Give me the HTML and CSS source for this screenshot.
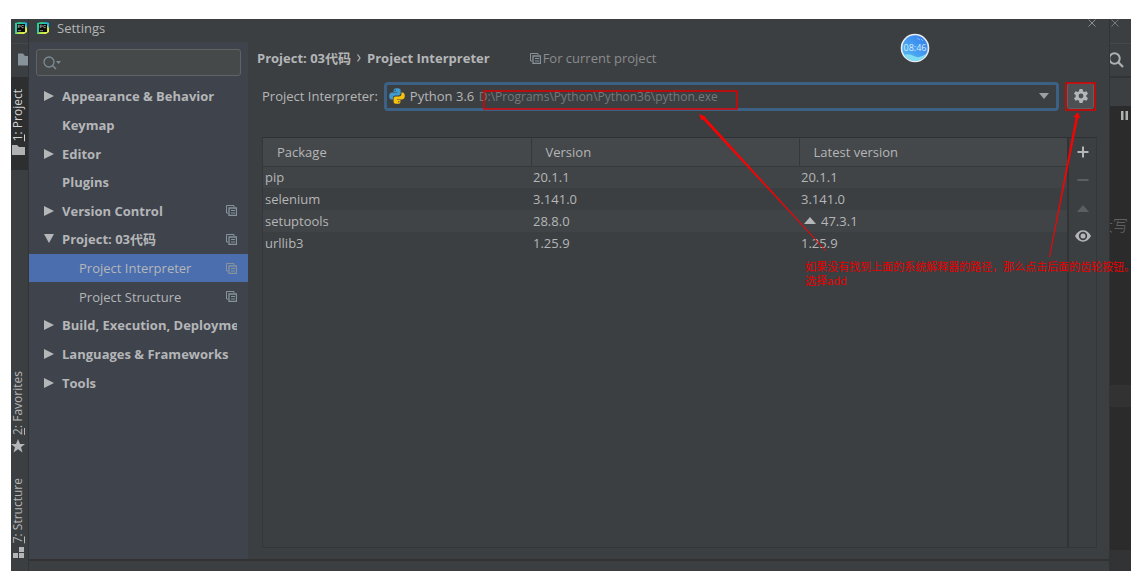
FILE: index.html
```html
<!DOCTYPE html>
<html lang="zh-CN">
<head>
<meta charset="utf-8">
<title>Settings</title>
<link rel="stylesheet" href="styles.css">
</head>
<body>
<svg class="defs" width="0" height="0" aria-hidden="true">
  <defs>
    <linearGradient id="pc-fill" x1="0" y1="0" x2="1" y2="1">
      <stop offset="0" stop-color="#21d789"/><stop offset=".45" stop-color="#2fc4a8"/><stop offset=".6" stop-color="#b6e04a"/><stop offset="1" stop-color="#fcf84a"/>
    </linearGradient>
    <linearGradient id="clock-fill" x1="0" y1="1" x2="1" y2="0">
      <stop offset="0" stop-color="#5cc0f2"/><stop offset="1" stop-color="#2f78ee"/>
    </linearGradient>
    <symbol id="pc" viewBox="0 0 12 12">
      <path d="M0 1 5 0 12 1V10L9 12H0Z" fill="url(#pc-fill)"/>
      <path d="M8 0 12 1V6Z" fill="#14b6e8"/>
      <path d="M2 2H10V10H2Z" fill="#0b0b0b"/>
      <path d="M3.2 6V3.2H4.6Q5.4 3.2 5.4 4T4.6 4.9H3.2M8.8 3.6Q6.4 2.6 6.4 4.5T8.8 5.6M3 8.7H6" fill="none" stroke="#ddd" stroke-width=".6"/>
    </symbol>
    <symbol id="folder" viewBox="0 0 13 12"><path d="M0 0H5L7 2.5H13V12H0Z" fill="currentColor"/></symbol>
    <symbol id="copy" viewBox="0 0 11 11">
      <path d="M2 8H.5V.5H8V2" fill="none" stroke="currentColor"/>
      <path d="M3 3H10.500V10.500H3Z" fill="none" stroke="currentColor" stroke-width="1.300"/><path d="M5 5.500H9M5 8H9" stroke="currentColor"/>
    </symbol>
    <symbol id="right" viewBox="0 0 10 10"><path d="M0 0 10 5 0 10Z" fill="currentColor"/></symbol>
    <symbol id="down" viewBox="0 0 10 10"><path d="M0 0H10L5 9Z" fill="currentColor"/></symbol>
    <symbol id="up" viewBox="0 0 12 7"><path d="M0 7 6 0 12 7Z" fill="currentColor"/></symbol>
    <symbol id="cross" viewBox="0 0 8 8"><path d="M.5.5 7.5 7.5M7.5.5.5 7.5" stroke="currentColor" stroke-width="1"/></symbol>
  </defs>
</svg>

<div class="frame">
  <nav class="rail" aria-label="Tool windows">
    <div class="rail-logo"><svg width="12" height="12"><use href="#pc"/></svg></div>
    <div class="rail-folder"><svg width="13" height="13"><use href="#folder"/></svg></div>
    <button class="rail-tab active"><svg width="13" height="10" viewBox="0 0 13 10"><path d="M0 0H5L7 2H13V10H0Z" fill="currentColor"/></svg><span><u>1</u>: Project</span></button>
    <div class="rail-gap"></div>
    <button class="rail-tab"><svg width="14" height="14" viewBox="0 0 14 14"><path d="M7 0 9 5H14L10 8.200 11.500 13.500 7 10.300 2.500 13.500 4 8.200 0 5H5Z" fill="currentColor"/></svg><span><u>2</u>: Favorites</span></button>
    <button class="rail-tab last"><svg width="11" height="11" viewBox="0 0 11 11"><path d="M6 0H11V5H6ZM0 6H5V11H0ZM6 6H11V11H6Z" fill="currentColor"/></svg><span><u>7</u>: Structure</span></button>
  </nav>

  <section class="dialog">
    <header class="titlebar">
      <svg width="12" height="12"><use href="#pc"/></svg>
      <h1>Settings</h1>
      <button class="close" aria-label="Close"><svg width="8" height="8"><use href="#cross"/></svg></button>
    </header>

    <div class="content">
      <aside class="sidebar">
        <div class="search">
          <svg width="18" height="14" viewBox="0 0 18 14"><circle cx="6" cy="6" r="5" fill="none" stroke="currentColor" stroke-width="1.300"/><path d="M9.500 9.500 13 13" stroke="currentColor" stroke-width="1.500"/><path d="M13 5H18L15.500 8Z" fill="currentColor"/></svg>
          <input type="text" aria-label="Search settings">
        </div>
        <ul class="tree">
          <li><svg class="arrow"><use href="#right"/></svg><span>Appearance &amp; Behavior</span></li>
          <li><i class="arrow"></i><span>Keymap</span></li>
          <li><svg class="arrow"><use href="#right"/></svg><span>Editor</span></li>
          <li><i class="arrow"></i><span>Plugins</span></li>
          <li><svg class="arrow"><use href="#right"/></svg><span>Version Control</span><svg class="copy"><use href="#copy"/></svg></li>
          <li><svg class="arrow"><use href="#down"/></svg><span>Project: 03代码</span><svg class="copy"><use href="#copy"/></svg></li>
          <li class="child selected"><span>Project Interpreter</span><svg class="copy"><use href="#copy"/></svg></li>
          <li class="child"><span>Project Structure</span><svg class="copy"><use href="#copy"/></svg></li>
          <li><svg class="arrow"><use href="#right"/></svg><span>Build, Execution, Deployment</span></li>
          <li><svg class="arrow"><use href="#right"/></svg><span>Languages &amp; Frameworks</span></li>
          <li><svg class="arrow"><use href="#right"/></svg><span>Tools</span></li>
        </ul>
      </aside>

      <main class="main">
        <div class="crumbs">
          <strong>Project: 03代码</strong>
          <svg width="4" height="8" viewBox="0 0 4 8"><path d="M.5.5 3 4 .5 7.500" fill="none" stroke="currentColor" stroke-width="1.200"/></svg>
          <strong>Project Interpreter</strong>
          <span class="scope"><svg class="copy"><use href="#copy"/></svg>For current project</span>
        </div>

        <div class="picker">
          <label for="interpreter">Project Interpreter:</label>
          <div class="combo">
            <select id="interpreter"><option>Python 3.6</option></select>
            <svg class="python" width="16" height="16" viewBox="0 0 16 16"><path d="M7.900.2C4.800.2 4.600 1.400 4.600 2.300V4H8.200V4.600H3C1.200 4.600.2 6 .2 8.200S1.300 11.600 2.700 11.600H4V9.700C4 8.300 5 7.500 6.300 7.500H9.700C10.900 7.500 11.600 6.600 11.600 5.600V2.300C11.600.7 9.900.2 7.900.2Z" fill="#3f9bcf"/><path d="M8.100 15.800C11.200 15.800 11.400 14.600 11.400 13.700V12H7.800V11.400H13C14.800 11.400 15.800 10 15.800 7.800S14.700 4.400 13.300 4.400H12.400V6.300C12.400 7.700 11.200 8.500 9.900 8.500H6.500C5.300 8.500 4.600 9.400 4.600 10.400V13.700C4.600 15.300 6.100 15.800 8.100 15.800Z" fill="#f4c20d"/><circle cx="6.200" cy="2.200" r=".7" fill="#3c3f41"/><circle cx="9.800" cy="13.800" r=".7" fill="#3c3f41"/></svg>
            <span class="path">D:\Programs\Python\Python36\python.exe</span>
            <svg class="caret" width="10" height="6" viewBox="0 0 10 6"><path d="M0 0H10L5 6Z" fill="currentColor"/></svg>
          </div>
          <button class="gear" aria-label="Interpreter options"><svg width="14" height="14" viewBox="0 0 14 14"><path fill="currentColor" fill-rule="evenodd" d="M5.500 0H8.500L9 2.300 10.200 3 12.500 2.300 14 4.800 12.300 6.300V7.700L14 9.200 12.500 11.700 10.200 11 9 11.700 8.500 14H5.500L5 11.700 3.800 11 1.500 11.700 0 9.200 1.700 7.700V6.300L0 4.800 1.500 2.300 3.800 3 5 2.300ZM7 4.600A2.400 2.400 0 1 0 7 9.400 2.400 2.400 0 1 0 7 4.600Z"/></svg></button>
        </div>

        <div class="packages">
          <div class="table-area">
            <table>
              <thead><tr><th>Package</th><th>Version</th><th>Latest version</th></tr></thead>
              <tbody>
                <tr><td>pip</td><td>20.1.1</td><td>20.1.1</td></tr>
                <tr><td>selenium</td><td>3.141.0</td><td>3.141.0</td></tr>
                <tr><td>setuptools</td><td>28.8.0</td><td><svg class="upgrade" width="12" height="7"><use href="#up"/></svg>47.3.1</td></tr>
                <tr><td>urllib3</td><td>1.25.9</td><td>1.25.9</td></tr>
              </tbody>
            </table>
          </div>
          <div class="tools">
            <button aria-label="Install"><svg width="12" height="12" viewBox="0 0 12 12"><path d="M6 .5V11.500M.5 6H11.500" stroke="currentColor" stroke-width="2"/></svg></button>
            <button class="off" aria-label="Uninstall"><svg width="12" height="2" viewBox="0 0 12 2"><path d="M.5 0H11.500V2H.5Z" fill="currentColor"/></svg></button>
            <button class="off" aria-label="Upgrade"><svg width="12" height="7"><use href="#up"/></svg></button>
            <button aria-label="Show early releases"><svg width="16" height="12" viewBox="0 0 16 12"><path fill="currentColor" fill-rule="evenodd" d="M0 6Q3 .3 8 .3T16 6Q13 11.700 8 11.700T0 6ZM8 1.800A4.200 4.200 0 1 0 8 10.200 4.200 4.200 0 1 0 8 1.800Z"/><circle cx="8" cy="6" r="2.500" fill="currentColor"/></svg></button>
          </div>
        </div>
      </main>
    </div>
    <footer class="dialog-foot"></footer>
  </section>

  <div class="editor">
    <div class="ed-title"><svg width="8" height="8"><use href="#cross"/></svg></div>
    <div class="ed-search"><svg width="16" height="16" viewBox="0 0 16 16"><circle cx="6.500" cy="6.500" r="5.200" fill="none" stroke="currentColor" stroke-width="2"/><path d="M10.300 10.300 15 15" stroke="currentColor" stroke-width="2.200"/></svg></div>
    <div class="ed-tabs"></div>
    <div class="ed-code"><svg width="7" height="9" viewBox="0 0 7 9"><path d="M0 0H2.500V9H0ZM4.500 0H7V9H4.500Z" fill="currentColor"/></svg><p>大写</p></div>
    <div class="ed-line"></div>
    <div class="ed-rest"></div>
    <div class="ed-foot"></div>
  </div>

  <svg class="marks" width="1120" height="552" viewBox="11 19 1120 552" aria-hidden="true">
    <g fill="none" stroke="#e00000" stroke-width="1.500">
      <rect x="484" y="91" width="253" height="18"/>
      <rect x="1066" y="83" width="29" height="27"/>
    </g>
    <g stroke="#f00" fill="#f00">
      <path d="M826 251 701.500 117.500 703.500 116Z" stroke-width=".6"/>
      <path d="M699 114 706 117 701.500 120.500Z" stroke="none"/>
      <path d="M1049.500 257 1076 117 1078 117Z" stroke-width=".6"/>
      <path d="M1078 112 1080 118 1073.500 117Z" stroke="none"/>
    </g>
  </svg>
  <p class="note">如果没有找到上面的系统解释器的路径，那么点击后面的齿轮按钮。<br>选择add</p>
  <div class="clock"><svg width="30" height="30" viewBox="0 0 30 30"><circle cx="15" cy="15" r="13.500" fill="url(#clock-fill)" stroke="#e9edf1" stroke-width="1.600"/><path d="M4 22Q9 20 14 23T26 21Q23 28 15 28 8 28 4 22Z" fill="#7fdcf2"/><path d="M17 5 20 7M21 6 23 8" stroke="#7db8ff"/></svg><time>08:46</time></div>
</div>
</body>
</html>
```

FILE: styles.css
```css
* { box-sizing: border-box; }

body {
  margin: 0;
  padding: 19px 0 13px 11px;
  min-height: 100vh;
  display: flex;
  background: #fff;
  color: #b4b6b8;
  font: 13px/18px "Open Sans", "Noto Sans CJK SC", sans-serif;
  overflow: hidden;
}
svg { display: block; flex: none; }
.defs { position: absolute; }
h1, p, ul { margin: 0; padding: 0; font: inherit; }
button { padding: 0; border: 0; background: none; color: inherit; font: inherit; display: flex; align-items: center; justify-content: center; }

.frame { position: relative; flex: 1; min-width: 0; display: flex; background: #3c3f41; overflow: hidden; }

/* Left tool window strip */
.rail { width: 18px; display: flex; flex-direction: column; border-right: 1px solid #323436; }
.rail-logo { height: 25px; padding: 3px 0 0 4px; border-bottom: 1px solid #46494b; }
.rail-folder { height: 33px; padding: 9px 0 0 7px; color: #87939a; overflow: hidden; }
.rail-tab { flex-direction: column-reverse; justify-content: flex-start; gap: 4px; padding: 0 3px 10px 0; font-size: 12px; line-height: 14px; }
.rail-tab span { writing-mode: vertical-rl; transform: rotate(180deg); white-space: nowrap; }
.rail-tab.active { height: 93px; padding-bottom: 15px; background: #2c2e2f; color: #d0d2d3; }
.rail-tab.active svg { color: #afb1b3; }
.rail-gap { flex: 1; }
.rail-tab.last { padding-top: 15px; padding-bottom: 13px; }

/* Settings dialog */
.dialog { flex: 1; min-width: 0; display: flex; flex-direction: column; }
.titlebar { height: 23px; display: flex; align-items: center; gap: 8px; padding: 0 13px 6px 8px; }
.titlebar h1 { flex: 1; font-size: 13px; }
.close { align-self: flex-start; color: #8b8d8f; }
.content { flex: 1; display: flex; min-height: 0; }
.dialog-foot { height: 12px; border-top: 2px solid #323232; }

.sidebar { width: 219px; padding-top: 7px; background: #3f434c; }
.search { height: 27px; margin: 0 7px 6px 7px; display: flex; align-items: center; gap: 4px; padding: 0 6px; border: 1px solid #606364; border-radius: 3px; background: #45494a; color: #7d8b93; }
.search input { flex: 1; min-width: 0; border: 0; outline: 0; background: none; color: #bbb; font: inherit; }
.tree { height: 315px; display: grid; grid-auto-rows: 1fr; list-style: none; font-weight: 700; }
.tree li { display: flex; align-items: center; gap: 8px; padding: 0 11px 0 15px; white-space: nowrap; min-width: 0; }
.tree span { flex: 1; min-width: 0; overflow: hidden; }
.arrow { width: 10px; height: 10px; flex: none; }
.copy { width: 11px; height: 11px; color: #87939a; }
.tree .child { padding-left: 50px; font-weight: 400; }
.tree .selected { background: #4b6eaf; }

.main { flex: 1; min-width: 0; display: flex; flex-direction: column; padding: 6px 12px 11px 14px; }
.crumbs { display: flex; align-items: center; gap: 6px; margin-left: -5px; height: 20px; }
.scope { display: flex; align-items: center; gap: 2px; margin-left: 34px; color: #8a8c8e; }
.picker { display: flex; align-items: center; gap: 8px; margin: 14px 3px 27px 0; height: 28px; }
.picker label { white-space: nowrap; margin-right: -2px; }
.combo { flex: 1; display: grid; grid-template-columns: 21px 74px 1fr 20px; align-items: center; }
.combo > * { grid-row: 1; pointer-events: none; }
.combo select { grid-column: 1 / -1; pointer-events: auto; width: 100%; height: 29px; padding: 0 20px 0 23px; appearance: none; outline: 0; border: 3px solid #3d6185; border-radius: 4px; background: #3c3f41; color: #b4b6b8; font: inherit; }
.python { grid-column: 1; justify-self: end; }
.path { grid-column: 3; padding-top: 2px; color: #76797b; font-size: 12px; }
.caret { grid-column: 4; color: #9da0a2; }
.gear { width: 27px; height: 26px; border: 1px solid #5e6163; border-radius: 3px; background: #4c5052; }

.packages { flex: 1; display: flex; border: 1px solid #343638; border-top-color: #2f3132; }
.table-area { flex: 1; min-width: 0; }
table { width: 100%; table-layout: fixed; border-collapse: collapse; }
th { height: 28px; padding: 0 0 0 14px; text-align: left; font-weight: 400; background: #45484a; border-bottom: 1px solid #36393b; }
th + th { border-left: 1px solid #36393b; }
td { height: 22px; padding: 0 2px; }
tbody tr:nth-child(odd) { background: #414446; }
.upgrade { display: inline-block; margin: 0 5px 2px 3px; }
.tools { width: 29px; border-left: 2px solid #313335; display: flex; flex-direction: column; color: #b4b6b8; }
.tools button { height: 28px; }
.tools .off { color: #5c5f61; }

/* Editor window visible behind the dialog */
.editor { width: 22px; display: flex; flex-direction: column; background: #2b2b2b; border-left: 1px solid #313335; overflow: hidden; }
.ed-title { height: 25px; background: #3c3f41; border-bottom: 1px solid #46494b; color: #77797b; }
.ed-title svg { margin-left: 1px; }
.ed-search { height: 34px; padding-top: 8px; background: #3c3f41; border-bottom: 2px solid #323436; color: #afb1b3; }
.ed-search svg { margin-left: -2px; }
.ed-tabs { height: 28px; background: #3c3f41; }
.ed-code { flex: 277; padding-top: 5px; color: #afb1b3; }
.ed-code svg { margin-left: 11px; }
.ed-code p { margin-top: 95px; display: flex; justify-content: flex-end; padding-right: 3px; white-space: nowrap; font: 300 15px/20px "Noto Sans CJK SC", sans-serif; color: #6b6b6b; }
.ed-line { height: 22px; background: #323232; }
.ed-rest { flex: 145; }
.ed-foot { height: 21px; background: #313335; }

/* Annotations over the windows */
.marks { position: absolute; top: 0; left: 0; }
.note { position: absolute; top: 240px; left: 794px; color: #e60000; font: 11px/14px "Noto Sans CJK SC", sans-serif; white-space: nowrap; }
.clock { position: absolute; top: 14px; left: 889px; width: 30px; height: 30px; display: grid; place-items: center; }
.clock > * { grid-area: 1 / 1; }
.clock time { color: #d5ecff; font-size: 9px; line-height: 12px; }
```
